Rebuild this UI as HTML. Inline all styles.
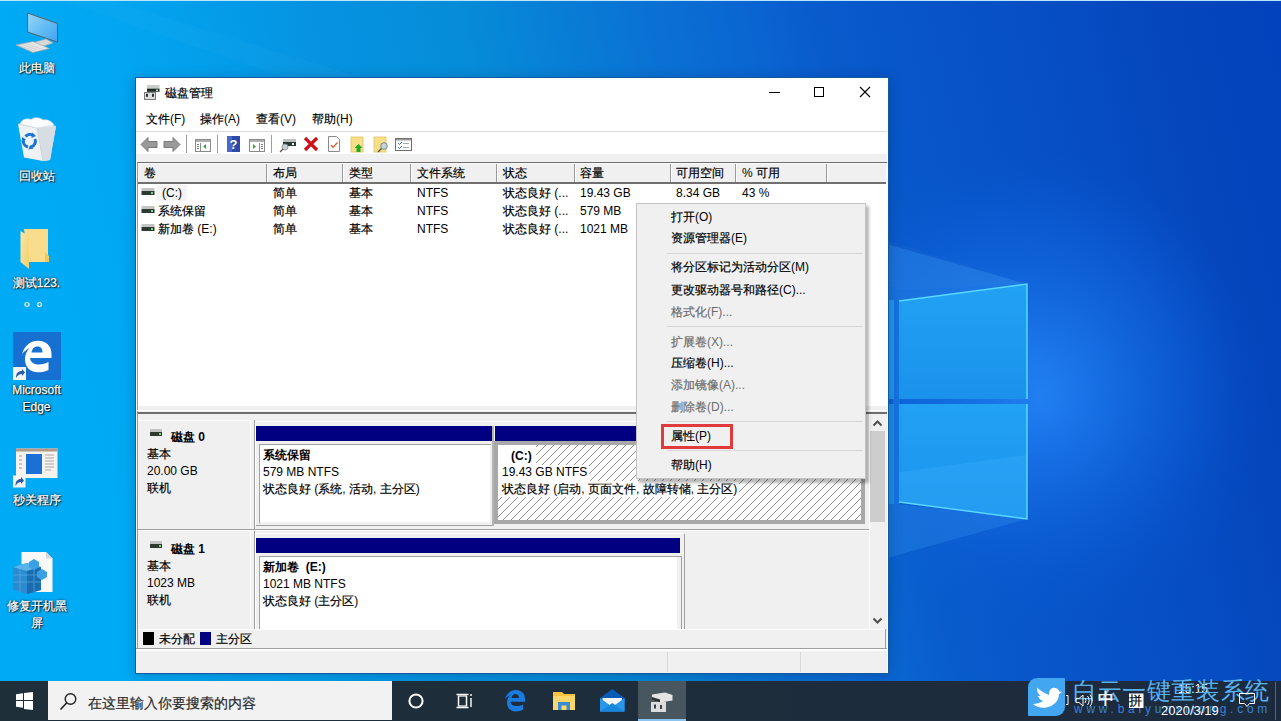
<!DOCTYPE html>
<html><head><meta charset="utf-8">
<style>
*{margin:0;padding:0;box-sizing:border-box}
html,body{width:1281px;height:721px;overflow:hidden}
body{position:relative;font-family:"Liberation Sans",sans-serif;font-size:12px;color:#000;background:#0050c8}
.a{position:absolute}
.t{position:absolute;white-space:nowrap;line-height:14px;font-size:12px}
.c{-webkit-text-stroke-width:0.2px}

#taskbar{left:0;top:681px;width:1281px;height:40px;background:linear-gradient(90deg,#1f2f3a,#1e2d3b 600px,#1c2a3e)}
#win{left:135px;top:77px;width:754px;height:597px;border:1px solid #1458a2;background:#fff;box-shadow:0 2px 12px rgba(0,20,60,.25)}
.hl{position:absolute;height:1px}
.vl{position:absolute;width:1px}
</style></head><body>
<svg id="bg" class="a" style="left:0;top:0" width="1281" height="681" viewBox="0 0 1281 681">
 <defs>
  <linearGradient id="g0" gradientUnits="userSpaceOnUse" x1="0" y1="0" x2="1281" y2="-284">
   <stop offset="0" stop-color="#00aaf4"/>
   <stop offset="0.1" stop-color="#02a4f0"/>
   <stop offset="0.22" stop-color="#0594e2"/>
   <stop offset="0.34" stop-color="#068cd8"/>
   <stop offset="0.476" stop-color="#0a72d4"/>
   <stop offset="0.55" stop-color="#0a66d2"/>
   <stop offset="0.6" stop-color="#095ccc"/>
   <stop offset="0.66" stop-color="#0856ca"/>
   <stop offset="0.8" stop-color="#064cc2"/>
   <stop offset="0.86" stop-color="#0546bc"/>
   <stop offset="0.95" stop-color="#0242bc"/>
  </linearGradient>
  <radialGradient id="glow" gradientUnits="userSpaceOnUse" cx="1040" cy="400" r="230">
   <stop offset="0" stop-color="#2a8cff" stop-opacity="0.7"/>
   <stop offset="0.45" stop-color="#1a78f0" stop-opacity="0.35"/>
   <stop offset="1" stop-color="#0a60e0" stop-opacity="0"/>
  </radialGradient>
  <linearGradient id="pane" x1="0" y1="0" x2="0" y2="1">
   <stop offset="0" stop-color="#22a2f4"/>
   <stop offset="1" stop-color="#1a92ec"/>
  </linearGradient>
 <radialGradient id="glow2" gradientUnits="userSpaceOnUse" cx="1035" cy="360" r="210">
   <stop offset="0" stop-color="#2a90ff" stop-opacity="0.32"/>
   <stop offset="0.6" stop-color="#2080f8" stop-opacity="0.14"/>
   <stop offset="1" stop-color="#1070f0" stop-opacity="0"/>
  </radialGradient>
 <radialGradient id="cy" gradientUnits="userSpaceOnUse" cx="0" cy="681" r="750">
   <stop offset="0" stop-color="#00c4ff" stop-opacity="0.35"/>
   <stop offset="0.6" stop-color="#00b4ff" stop-opacity="0.15"/>
   <stop offset="1" stop-color="#00a0ff" stop-opacity="0"/>
  </radialGradient>
 </defs>
 <rect width="1281" height="681" fill="url(#g0)"/>
 <rect width="1281" height="681" fill="url(#glow)"/>
 <rect width="1281" height="681" fill="url(#glow2)"/>
 <!-- beams -->
 <path d="M60 0 L110 0 L1027 284 L900 290 Z" fill="#ffffff" opacity="0.025"/>
 <path d="M880 242 L1027 284 L899 301 L880 304 Z" fill="#4ab0ff" opacity="0.22"/>
 <path d="M880 502 L1027 519 L880 560 Z" fill="#4ab0ff" opacity="0.2"/>
 <!-- left pane sliver -->
 <rect x="893" y="300" width="7" height="204" fill="#1474e0"/>
 <rect x="888" y="300" width="6" height="99" fill="#1c96ee"/>
 <rect x="888" y="404" width="6" height="100" fill="#1a8eea"/>
 <!-- right panes -->
 <path d="M899 301 L1027 284 L1027 399 L899 399 Z" fill="url(#pane)"/>
 <path d="M899 404 L1027 404 L1027 519 L899 502 Z" fill="url(#pane)"/>
 <path d="M899 472 L1027 455 L1027 519 L899 502 Z" fill="#40b8ff" opacity="0.25"/>
 <path d="M899 301 L1027 284 L1027 399" fill="none" stroke="#5ad8ff" stroke-width="1.5"/>
 <path d="M1027 404 L1027 519 L899 502" fill="none" stroke="#5ad8ff" stroke-width="1.5"/>
</svg>


<!-- desktop icons -->
<div class="a" style="left:0;top:0;width:1281px;height:1px;background:#b8e6ff"></div>
<svg class="a" style="left:0;top:0" width="80" height="640" viewBox="0 0 80 640">
 <defs>
  <linearGradient id="scr" x1="0" y1="0" x2="1" y2="1"><stop offset="0" stop-color="#9ad6fb"/><stop offset="0.5" stop-color="#66bdf5"/><stop offset="1" stop-color="#3fa3ee"/></linearGradient>
  <linearGradient id="fold" x1="0" y1="0" x2="1" y2="1"><stop offset="0" stop-color="#fbe6a6"/><stop offset="1" stop-color="#f3cf6c"/></linearGradient>
 </defs>
 <!-- this pc -->
 <path d="M27.5 13 L57.5 23.5 L57.5 42 L27.5 32 Z" fill="url(#scr)" stroke="#566270" stroke-width="1"/>
 <path d="M34 42.5 L46 39 L53 43 L42 46.5 Z" fill="#d8d8d8" stroke="#b0b0b0" stroke-width="0.6"/>
 <path d="M16 45 L33 41.5 L49.5 48.5 L33 52.5 Z" fill="#e6e6e6" stroke="#a8a8a8" stroke-width="0.7"/>
 <path d="M21 44.2 L37.5 50 M25 43.3 L42 49.3 M19 45.6 L35 51.3" stroke="#b8b8b8" stroke-width="0.5"/>
 <!-- recycle bin -->
 <path d="M18 124 L37 121 L56 126 L50 160 L43 161 L24 157.5 Z" fill="#eef2f5"/>
 <path d="M37 128 L56 126 L50 160 L43 161 Z" fill="#d6dde3"/>
 <path d="M18 124 L37 128 L43 161" fill="none" stroke="#c4ccd4" stroke-width="0.7"/>
 <path d="M20 124 C22 119 27 118 31 119.5 C34 117 40 117 43 120 C47 119 52 121 54 125 L37 128 Z" fill="#fafbfc" stroke="#d0d6dc" stroke-width="0.6"/>
 <path d="M25.5 136.5 A6 6 0 0 1 33.5 135.5" fill="none" stroke="#1a74d4" stroke-width="3"/>
 <path d="M35 139 A6 6 0 0 1 31 147" fill="none" stroke="#1a74d4" stroke-width="3"/>
 <path d="M28 147 A6 6 0 0 1 23.5 140" fill="none" stroke="#1a74d4" stroke-width="3"/>
 <path d="M32 132.5 L36 136 L31.5 138 Z M33.5 148.5 L28.5 149.5 L30 145 Z M21.5 142.5 L22 137 L26 139.5 Z" fill="#1a74d4"/>
 <!-- folder -->
 <path d="M24 229 L48 229 L48 262 L29 262 Z" fill="#f9dc8c"/>
 <path d="M45 252 L49 256 L49 262 L45 262 Z" fill="#f0c860"/>
 <path d="M20.5 231 L29 236 L29 269 L20.5 262 Z" fill="url(#fold)"/>
 <!-- edge -->
 <rect x="13" y="332" width="48" height="48" fill="#1670d2"/>
 <path d="M22 354 C25 345 31 340.8 38 340.8 C46 340.8 51.5 346 51.5 354 L51.5 358 L30 358 C30.5 362 33.5 364.5 38.5 364.5 C42.5 364.5 46 363.5 48.5 362 L48.5 370 C45.5 371.6 42 372.3 38 372.3 C30 372.3 25 367 25 359 C25 355 26.5 351 29.5 348 C26.5 349.5 24 351.5 22 354 Z" fill="#fff"/>
 <path d="M31.5 352.5 C32 348.5 34.5 346.5 37.5 346.5 C40.5 346.5 42.5 348.5 42.5 352.5 Z" fill="#1670d2"/>
 <rect x="13" y="367" width="13" height="13" fill="#f4f4f4"/>
 <path d="M16 378 C16 373 18 371 22 371 L22 369 L25 372.5 L22 376 L22 374 C19.5 374 17.5 375.5 16 378 Z" fill="#2a5aa8"/>
 <!-- window app -->
 <rect x="16" y="448.5" width="41.5" height="29.5" fill="#f6f2ee"/>
 <rect x="16" y="448.5" width="41.5" height="3" fill="#b09a8c"/>
 <rect x="26" y="454" width="16" height="20" fill="#1a70d6"/>
 <path d="M19 456h3M19 460h3M19 464h3M19 468h3" stroke="#999" stroke-width="1"/>
 <path d="M45 455h9M45 458h9M45 461h9M45 464h9M45 467h9M45 470h6" stroke="#aaa" stroke-width="1"/>
 <rect x="13" y="475.5" width="12.5" height="12" fill="#f4f4f4"/>
 <path d="M15.5 486 C15.5 481 17.5 479 21 479 L21 477 L24 480.5 L21 484 L21 482 C18.5 482 17 483.5 15.5 486 Z" fill="#2a5aa8"/>
 <!-- regedit file -->
 <path d="M21.5 552 L46 552 L52.5 558.5 L52.5 592 L21.5 592 Z" fill="#f8f8f8"/>
 <path d="M46 552 L46 558.5 L52.5 558.5 Z" fill="#d8d8d8"/>
 <path d="M13 567 L27 563 L41 567 L41 590 L27 594 L13 590 Z" fill="#2c8ad0"/>
 <path d="M13 567 L27 563 L41 567 L27 571 Z" fill="#5ab4ec"/>
 <path d="M27 571 L41 567 L41 590 L27 594 Z" fill="#1a6cb0"/>
 <path d="M13 575h28M13 582h28M20 565v27M34 565v27" stroke="#62b6ea" stroke-width="0.8" opacity="0.7"/>
 <path d="M29 562 L34 559 L39 562 L39 567 L34 570 L29 567 Z" fill="#3aa0e4"/>
 <path d="M37 572 L42 569 L47 572 L47 577 L42 580 L37 577 Z" fill="#3aa0e4"/>
</svg>
<style>
.d{position:absolute;white-space:nowrap;line-height:16px;font-size:12px;color:#fff;text-align:center;text-shadow:0 0 1px rgba(0,0,0,.9),1px 1px 1px rgba(0,0,0,.9),0 0 3px rgba(0,0,0,.7);-webkit-text-stroke-width:0.25px}
</style>
<div class="d" style="left:-1px;width:75px;top:60px">此电脑</div>
<div class="d" style="left:-1px;width:75px;top:168px">回收站</div>
<div class="d" style="left:-1px;width:75px;top:275px">测试123.</div>
<svg class="a" style="left:24px;top:301px" width="20" height="8" viewBox="0 0 20 8"><circle cx="3" cy="3.5" r="2" fill="none" stroke="#fff" stroke-width="1.2"/><circle cx="15.5" cy="3.5" r="2" fill="none" stroke="#fff" stroke-width="1.2"/></svg>
<div class="d" style="left:-1px;width:75px;top:382px">Microsoft</div>
<div class="d" style="left:-1px;width:75px;top:399px">Edge</div>
<div class="d" style="left:-1px;width:75px;top:492px">秒关程序</div>
<div class="d" style="left:-1px;width:75px;top:598px">修复开机黑</div>
<div class="d" style="left:-1px;width:75px;top:615px">屏</div>

<!-- window -->
<div id="win" class="a"></div>
<div class="a" style="left:136px;top:131px;width:751px;height:1px;background:#dadada"></div>
<div class="a" style="left:136px;top:154px;width:751px;height:8px;background:#f0f0f0"></div>
<!-- title -->
<svg class="a" style="left:144px;top:85px" width="17" height="16" viewBox="0 0 17 16">
<rect x="3" y="0" width="12.5" height="3.6" fill="#c9cec9"/>
<rect x="3" y="3.6" width="12.5" height="3.2" fill="#1f2a22"/>
<rect x="12" y="4.6" width="2" height="1.4" fill="#d8e8d8"/>
<rect x="0.5" y="7.5" width="11" height="7" fill="#dedede" stroke="#7c7c7c" stroke-width="1"/>
<rect x="2" y="8.8" width="2" height="3" fill="#2e3040"/>
<rect x="8" y="8.8" width="2" height="3" fill="#2e3040"/>
</svg>
<div class="t" style="left:165px;top:86px"><span class="c">磁盘管理</span></div>
<!-- caption buttons -->
<div class="a" style="left:769px;top:92px;width:11px;height:1px;background:#000"></div>
<div class="a" style="left:814px;top:87px;width:10px;height:10px;border:1px solid #000"></div>
<svg class="a" style="left:859px;top:86px" width="12" height="12" viewBox="0 0 12 12"><path d="M1 1L11 11M11 1L1 11" stroke="#000" stroke-width="1.1"/></svg>
<!-- menu -->
<div class="t" style="left:146px;top:112px"><span class="c">文件</span>(F)</div>
<div class="t" style="left:200px;top:112px"><span class="c">操作</span>(A)</div>
<div class="t" style="left:256px;top:112px"><span class="c">查看</span>(V)</div>
<div class="t" style="left:312px;top:112px"><span class="c">帮助</span>(H)</div>

<!-- toolbar -->
<svg class="a" style="left:136px;top:132px" width="290" height="22" viewBox="0 0 290 22">
 <!-- back -->
 <path d="M5 12.5L12 5.5V9.5H21V15.5H12V19.5Z" fill="#9a9a9a" stroke="#7a7a7a" stroke-width="1"/>
 <!-- forward -->
 <path d="M44 12.5L37 5.5V9.5H28V15.5H37V19.5Z" fill="#9a9a9a" stroke="#7a7a7a" stroke-width="1"/>
 <rect x="50" y="3" width="1" height="18" fill="#a0a0a0"/>
 <!-- show tree -->
 <rect x="59.5" y="7.5" width="15" height="12" fill="#fff" stroke="#8a8a8a"/>
 <rect x="60" y="8" width="14" height="2" fill="#b0b0b0"/>
 <rect x="61" y="12" width="2" height="1" fill="#777"/><rect x="61" y="14" width="2" height="1" fill="#777"/><rect x="61" y="16" width="2" height="1" fill="#777"/>
 <rect x="64" y="11" width="1" height="8" fill="#8a8a8a"/>
 <path d="M70 12V17L67 14.5Z" fill="#3aa63a"/>
 <rect x="81" y="3" width="1" height="18" fill="#a0a0a0"/>
 <!-- help -->
 <rect x="91" y="4" width="13" height="16" fill="#2e4aa8"/>
 <rect x="91" y="4" width="5" height="16" fill="#4a66c8"/>
 <text x="97.5" y="17" font-family="Liberation Sans" font-weight="bold" font-size="13" fill="#fff" text-anchor="middle">?</text>
 <!-- show action -->
 <rect x="113.5" y="7.5" width="15" height="12" fill="#fff" stroke="#8a8a8a"/>
 <rect x="114" y="8" width="14" height="2" fill="#b0b0b0"/>
 <rect x="125" y="12" width="2" height="1" fill="#777"/><rect x="125" y="14" width="2" height="1" fill="#777"/><rect x="125" y="16" width="2" height="1" fill="#777"/>
 <rect x="123" y="11" width="1" height="8" fill="#8a8a8a"/>
 <path d="M117 12V17L120 14.5Z" fill="#3aa63a"/>
 <rect x="135" y="3" width="1" height="18" fill="#a0a0a0"/>
 <!-- connect drive -->
 <rect x="147" y="7" width="13" height="3" fill="#c0c0c0"/>
 <rect x="147" y="10" width="13" height="4" fill="#2b3a30"/>
 <rect x="156" y="11" width="2" height="2" fill="#fff"/>
 <circle cx="149" cy="15" r="3" fill="#c8d0d8" stroke="#888" stroke-width="0.8"/>
 <path d="M147 17L144 20" stroke="#555" stroke-width="1.3"/>
 <!-- red x -->
 <path d="M169 6L181 18M181 6L169 18" stroke="#d0101a" stroke-width="3.2"/>
 <!-- doc check -->
 <path d="M192.5 4.5H200.5L203.5 7.5V19.5H192.5Z" fill="#fff" stroke="#8a8a8a"/>
 <path d="M195 13L197 15.5L201.5 10.5" stroke="#e06030" stroke-width="1.3" fill="none"/>
 <!-- folder up -->
 <rect x="215" y="5" width="12" height="15" fill="#f8df8a" stroke="#e0c060" stroke-width="0.8"/>
 <path d="M222.5 12L226.5 16H224.5V20H220.5V16H218.5Z" fill="#22aa22"/>
 <!-- folder search -->
 <rect x="238" y="5" width="12" height="15" fill="#f8df8a" stroke="#e0c060" stroke-width="0.8"/>
 <circle cx="248" cy="14" r="3.3" fill="#c8d4dc" stroke="#7a8a90" stroke-width="1"/>
 <path d="M245.5 16.5L242 20" stroke="#555" stroke-width="1.4"/>
 <!-- checklist -->
 <rect x="259.5" y="6.5" width="16" height="12" fill="#fff" stroke="#707070"/>
 <rect x="260" y="7" width="15" height="1.5" fill="#9a9a9a"/>
 <path d="M262 11L263.5 12.5L266 10M262 15L263.5 16.5L266 14" stroke="#3a6ad0" stroke-width="1" fill="none"/>
 <rect x="267" y="11" width="6" height="1" fill="#aaa"/><rect x="267" y="15" width="6" height="1" fill="#aaa"/>
</svg>

<!-- list view -->
<div class="a" style="left:137px;top:162px;width:750px;height:244px;border-top:1px solid #6e6e6e;border-left:1px solid #9a9a9a;background:#fff"></div>
<div class="a" style="left:138px;top:163px;width:748px;height:19px;background:#f0f0f0;border-top:1px solid #fafafa"></div>
<div class="a" style="left:138px;top:182px;width:748px;height:2px;background:#707070"></div>
<div class="vl" style="left:266px;top:164px;height:18px;background:#9a9a9a"></div><div class="vl" style="left:267px;top:164px;height:18px;background:#fdfdfd"></div>
<div class="vl" style="left:342px;top:164px;height:18px;background:#9a9a9a"></div><div class="vl" style="left:343px;top:164px;height:18px;background:#fdfdfd"></div>
<div class="vl" style="left:410px;top:164px;height:18px;background:#9a9a9a"></div><div class="vl" style="left:411px;top:164px;height:18px;background:#fdfdfd"></div>
<div class="vl" style="left:496px;top:164px;height:18px;background:#9a9a9a"></div><div class="vl" style="left:497px;top:164px;height:18px;background:#fdfdfd"></div>
<div class="vl" style="left:574px;top:164px;height:18px;background:#9a9a9a"></div><div class="vl" style="left:575px;top:164px;height:18px;background:#fdfdfd"></div>
<div class="vl" style="left:670px;top:164px;height:18px;background:#9a9a9a"></div><div class="vl" style="left:671px;top:164px;height:18px;background:#fdfdfd"></div>
<div class="vl" style="left:735px;top:164px;height:18px;background:#9a9a9a"></div><div class="vl" style="left:736px;top:164px;height:18px;background:#fdfdfd"></div>
<div class="vl" style="left:826px;top:164px;height:18px;background:#9a9a9a"></div><div class="vl" style="left:827px;top:164px;height:18px;background:#fdfdfd"></div>
<div class="t" style="left:144px;top:166px"><span class="c">卷</span></div>
<div class="t" style="left:273px;top:166px"><span class="c">布局</span></div>
<div class="t" style="left:349px;top:166px"><span class="c">类型</span></div>
<div class="t" style="left:417px;top:166px"><span class="c">文件系统</span></div>
<div class="t" style="left:503px;top:166px"><span class="c">状态</span></div>
<div class="t" style="left:580px;top:166px"><span class="c">容量</span></div>
<div class="t" style="left:676px;top:166px"><span class="c">可用空间</span></div>
<div class="t" style="left:742px;top:166px">% <span class="c">可用</span></div>

<div class="a" style="left:156px;top:185px;width:31px;height:16px;background:#f4f4f4"></div>
<svg class="a" style="left:141px;top:187px" width="14" height="46" viewBox="0 0 14 46">
 <g id="drv"><rect x="0.5" y="1" width="13" height="3" fill="#c4c4c4"/><rect x="0.5" y="4" width="13" height="4" fill="#2d3a30"/><rect x="10" y="5" width="2" height="2" fill="#7fd07f"/></g>
 <use href="#drv" y="18"/><use href="#drv" y="36"/>
</svg>
<div class="t" style="left:162px;top:186px">(C:)</div>
<div class="t" style="left:158px;top:204px"><span class="c">系统保留</span></div>
<div class="t" style="left:158px;top:222px"><span class="c">新加卷</span> (E:)</div>
<div class="t" style="left:273px;top:186px"><span class="c">简单</span></div>
<div class="t" style="left:273px;top:204px"><span class="c">简单</span></div>
<div class="t" style="left:273px;top:222px"><span class="c">简单</span></div>
<div class="t" style="left:349px;top:186px"><span class="c">基本</span></div>
<div class="t" style="left:349px;top:204px"><span class="c">基本</span></div>
<div class="t" style="left:349px;top:222px"><span class="c">基本</span></div>
<div class="t" style="left:417px;top:186px">NTFS</div>
<div class="t" style="left:417px;top:204px">NTFS</div>
<div class="t" style="left:417px;top:222px">NTFS</div>
<div class="t" style="left:503px;top:186px"><span class="c">状态良好</span> (...</div>
<div class="t" style="left:503px;top:204px"><span class="c">状态良好</span> (...</div>
<div class="t" style="left:503px;top:222px"><span class="c">状态良好</span> (...</div>
<div class="t" style="left:580px;top:186px">19.43 GB</div>
<div class="t" style="left:580px;top:204px">579 MB</div>
<div class="t" style="left:580px;top:222px">1021 MB</div>
<div class="t" style="left:676px;top:186px">8.34 GB</div>
<div class="t" style="left:742px;top:186px">43 %</div>

<!-- splitter -->
<div class="a" style="left:137px;top:406px;width:750px;height:7px;background:#f0f0f0;border-left:1px solid #9a9a9a"></div>
<div class="a" style="left:137px;top:410px;width:750px;height:1px;background:#fff"></div>

<!-- lower pane -->
<div class="a" style="left:137px;top:412px;width:750px;height:236px;background:#f0f0f0;border-top:2px solid #6e6e6e;border-left:1px solid #9a9a9a"></div>
<div class="a" style="left:136px;top:648px;width:751px;height:1px;background:#a0a0a0"></div>
<div class="a" style="left:136px;top:650px;width:751px;height:1px;background:#fff"></div>
<div class="a" style="left:136px;top:651px;width:751px;height:22px;background:#f0f0f0"></div>
<div class="vl" style="left:667px;top:652px;height:20px;background:#d8d8d8"></div>
<div class="vl" style="left:800px;top:652px;height:20px;background:#d8d8d8"></div>

<!-- scrollbar -->
<div class="a" style="left:869px;top:414px;width:17px;height:215px;background:#f0f0f0"></div>
<div class="a" style="left:870px;top:431px;width:15px;height:91px;background:#cdcdcd"></div>
<svg class="a" style="left:872px;top:419px" width="11" height="8" viewBox="0 0 11 8"><path d="M1.5 6.5L5.5 2.5L9.5 6.5" stroke="#505050" stroke-width="2" fill="none"/></svg>
<svg class="a" style="left:872px;top:617px" width="11" height="8" viewBox="0 0 11 8"><path d="M1.5 1.5L5.5 5.5L9.5 1.5" stroke="#505050" stroke-width="2" fill="none"/></svg>

<!-- disk 0 -->
<div class="a" style="left:138px;top:420px;width:113px;height:108px;border-top:1px solid #fff;border-right:1px solid #fff"></div>
<div class="vl" style="left:254px;top:420px;height:110px;background:#a0a0a0"></div>
<div class="a" style="left:255px;top:421px;width:611px;height:105px;border-top:1px solid #fff;border-left:1px solid #fff"></div>
<svg class="a" style="left:150px;top:429px" width="13" height="8" viewBox="0 0 13 8"><rect x="0" y="0" width="12" height="3" fill="#c4c4c4"/><rect x="0" y="3" width="12" height="4" fill="#2d3a30"/><rect x="9" y="4" width="2" height="2" fill="#7fd07f"/></svg>
<div class="t" style="left:171px;top:430px;font-weight:bold;-webkit-text-stroke-width:0">磁盘 0</div>
<div class="t" style="left:147px;top:447px"><span class="c">基本</span></div>
<div class="t" style="left:147px;top:464px">20.00 GB</div>
<div class="t" style="left:147px;top:481px"><span class="c">联机</span></div>

<div class="a" style="left:256px;top:426px;width:236px;height:15px;background:#000080"></div>
<div class="a" style="left:259px;top:444px;width:234px;height:81px;border:1px solid #a0a0a0;border-right:3px solid #f0f0f0;border-bottom:3px solid #f0f0f0;background:#fff"></div>
<div class="hl" style="left:256px;top:525px;width:238px;background:#a0a0a0"></div>
<div class="t" style="left:263px;top:448px;font-weight:bold;-webkit-text-stroke-width:0">系统保留</div>
<div class="t" style="left:263px;top:465px">579 MB NTFS</div>
<div class="t" style="left:263px;top:482px"><span class="c">状态良好</span> (<span class="c">系统</span>, <span class="c">活动</span>, <span class="c">主分区</span>)</div>

<div class="a" style="left:492px;top:426px;width:2px;height:100px;background:#b4b4b4"></div>
<div class="a" style="left:495px;top:426px;width:370px;height:15px;background:#000080"></div>
<div class="a" style="left:494px;top:441px;width:371px;height:83px;background:#a8a8a8"></div>
<svg class="a" style="left:498px;top:445px" width="363" height="75" viewBox="0 0 363 75" shape-rendering="crispEdges">
 <defs><pattern id="hatch" width="8" height="8" patternUnits="userSpaceOnUse">
  <rect width="8" height="8" fill="#fff"/>
  <rect x="7" y="0" width="1" height="1" fill="#909090"/><rect x="6" y="1" width="1" height="1" fill="#909090"/><rect x="5" y="2" width="1" height="1" fill="#909090"/><rect x="4" y="3" width="1" height="1" fill="#909090"/><rect x="3" y="4" width="1" height="1" fill="#909090"/><rect x="2" y="5" width="1" height="1" fill="#909090"/><rect x="1" y="6" width="1" height="1" fill="#909090"/><rect x="0" y="7" width="1" height="1" fill="#909090"/>
 </pattern></defs>
 <rect width="363" height="75" fill="url(#hatch)"/>
 <rect x="0" y="0" width="38" height="20" fill="#fff"/>
 <rect x="0" y="20" width="91" height="16" fill="#fff"/>
 <rect x="0" y="36" width="241" height="16" fill="#fff"/>
</svg>
<div class="t" style="left:511px;top:449px;font-weight:bold;-webkit-text-stroke-width:0">(C:)</div>
<div class="t" style="left:502px;top:465px">19.43 GB NTFS</div>
<div class="t" style="left:502px;top:482px"><span class="c">状态良好</span> (<span class="c">启动</span>, <span class="c">页面文件</span>, <span class="c">故障转储</span>, <span class="c">主分区</span>)</div>

<div class="hl" style="left:138px;top:529px;width:731px;background:#a0a0a0"></div>
<div class="hl" style="left:138px;top:530px;width:731px;background:#fff"></div>

<!-- disk 1 -->
<div class="a" style="left:138px;top:531px;width:113px;height:98px;border-right:1px solid #fff"></div>
<div class="vl" style="left:254px;top:531px;height:98px;background:#a0a0a0"></div>
<svg class="a" style="left:150px;top:541px" width="13" height="8" viewBox="0 0 13 8"><rect x="0" y="0" width="12" height="3" fill="#c4c4c4"/><rect x="0" y="3" width="12" height="4" fill="#2d3a30"/><rect x="9" y="4" width="2" height="2" fill="#7fd07f"/></svg>
<div class="t" style="left:171px;top:542px;font-weight:bold;-webkit-text-stroke-width:0">磁盘 1</div>
<div class="t" style="left:147px;top:559px"><span class="c">基本</span></div>
<div class="t" style="left:147px;top:576px">1023 MB</div>
<div class="t" style="left:147px;top:593px"><span class="c">联机</span></div>
<div class="a" style="left:255px;top:533px;width:430px;height:96px;border-top:1px solid #fff;border-left:1px solid #fff;border-right:1px solid #a0a0a0"></div>
<div class="a" style="left:256px;top:538px;width:424px;height:15px;background:#000080"></div>
<div class="a" style="left:259px;top:556px;width:423px;height:73px;border-top:1px solid #a0a0a0;border-left:1px solid #a0a0a0;border-right:1px solid #a0a0a0;border-right-color:#a0a0a0;background:#fff;box-shadow:inset -4px 0 0 #f0f0f0"></div>
<div class="t" style="left:263px;top:560px;font-weight:bold;-webkit-text-stroke-width:0">新加卷 &nbsp;(E:)</div>
<div class="t" style="left:263px;top:577px">1021 MB NTFS</div>
<div class="t" style="left:263px;top:594px"><span class="c">状态良好</span> (<span class="c">主分区</span>)</div>

<div class="vl" style="left:869px;top:414px;height:215px;background:#fff"></div>
<div class="hl" style="left:138px;top:629px;width:748px;background:#fff"></div>
<div class="vl" style="left:885px;top:629px;height:19px;background:#a0a0a0"></div>
<!-- legend -->
<div class="a" style="left:143px;top:632px;width:11px;height:13px;background:#000"></div>
<div class="t" style="left:159px;top:632px"><span class="c">未分配</span></div>
<div class="a" style="left:200px;top:632px;width:11px;height:13px;background:#000080"></div>
<div class="t" style="left:216px;top:632px"><span class="c">主分区</span></div>
<!-- context menu -->
<div class="a" style="left:639px;top:206px;width:230px;height:277px;background:rgba(0,0,0,0.28);filter:blur(1.5px)"></div>
<div class="a" style="left:636px;top:203px;width:230px;height:276px;background:#f0f0f0;border:1px solid #c4c4c4"></div>
<div class="t" style="left:671px;top:210px"><span class="c">打开</span>(O)</div>
<div class="t" style="left:671px;top:231px"><span class="c">资源管理器</span>(E)</div>
<div class="hl" style="left:667px;top:253px;width:196px;background:#d7d7d7"></div>
<div class="t" style="left:671px;top:260px"><span class="c">将分区标记为活动分区</span>(M)</div>
<div class="t" style="left:671px;top:283px"><span class="c">更改驱动器号和路径</span>(C)...</div>
<div class="t" style="left:671px;top:305px;color:#6d6d6d"><span class="c">格式化</span>(F)...</div>
<div class="hl" style="left:667px;top:326px;width:196px;background:#d7d7d7"></div>
<div class="t" style="left:671px;top:335px;color:#6d6d6d"><span class="c">扩展卷</span>(X)...</div>
<div class="t" style="left:671px;top:356px"><span class="c">压缩卷</span>(H)...</div>
<div class="t" style="left:671px;top:378px;color:#6d6d6d"><span class="c">添加镜像</span>(A)...</div>
<div class="t" style="left:671px;top:400px;color:#6d6d6d"><span class="c">删除卷</span>(D)...</div>
<div class="hl" style="left:667px;top:421px;width:196px;background:#d7d7d7"></div>
<div class="t" style="left:671px;top:429px"><span class="c">属性</span>(P)</div>
<div class="a" style="left:661px;top:424px;width:72px;height:25px;border:3px solid #e03a3c"></div>
<div class="hl" style="left:667px;top:450px;width:196px;background:#d7d7d7"></div>
<div class="t" style="left:671px;top:458px"><span class="c">帮助</span>(H)</div>
<div id="taskbar" class="a"></div>
<!-- taskbar -->
<div class="a" style="left:48px;top:681px;width:344px;height:39px;background:#f2f2f2"></div>
<svg class="a" style="left:0;top:681px" width="700" height="40" viewBox="0 0 700 40">
 <path d="M16 13.2 L23 12.3 L23 19 L16 19 Z M24 12.1 L33 11.1 L33 19 L24 19 Z M16 20 L23 20 L23 26.7 L16 25.8 Z M24 20 L33 20 L33 28.9 L24 27.9 Z" fill="#fff"/>
 <circle cx="70.5" cy="18" r="5.3" fill="none" stroke="#222" stroke-width="1.4"/>
 <path d="M66.8 21.8 L60.5 28.5" stroke="#222" stroke-width="1.6"/>
 <circle cx="416" cy="20" r="6.6" fill="none" stroke="#fff" stroke-width="2"/>
 <path d="M456.5 13.5h12M456.5 26.5h12M458.5 15v10M466.5 15v10" stroke="#fff" stroke-width="1.3" fill="none"/>
 <rect x="458.5" y="15" width="8" height="10" fill="none" stroke="#fff" stroke-width="1.2"/>
 <path d="M471 13v2M471 17v9" stroke="#fff" stroke-width="1.4"/>
 <!-- edge -->
 <g transform="translate(490.04,-222.74) scale(0.68)">
 <path d="M22 354 C25 345 31 340.8 38 340.8 C46 340.8 51.5 346 51.5 354 L51.5 358 L30 358 C30.5 362 33.5 364.5 38.5 364.5 C42.5 364.5 46 363.5 48.5 362 L48.5 370 C45.5 371.6 42 372.3 38 372.3 C30 372.3 25 367 25 359 C25 355 26.5 351 29.5 348 C26.5 349.5 24 351.5 22 354 Z" fill="#1a7ce0"/>
 <path d="M31.5 352.5 C32 348.5 34.5 346.5 37.5 346.5 C40.5 346.5 42.5 348.5 42.5 352.5 Z" fill="#1e2d3b"/>
 </g>
 <!-- explorer -->
 <path d="M553 11 L562 11 L564 13 L575 13 L575 29 L553 29 Z" fill="#f8c440"/>
 <rect x="553" y="15" width="22" height="14" fill="#fcd86a"/>
 <path d="M558 29 L558 21 L570 21 L570 29 L566.5 29 L566.5 24.5 L561.5 24.5 L561.5 29 Z" fill="#3a8ad6"/>
 <!-- mail -->
 <path d="M600 17 L612.3 8 L624.6 17 L624.6 30.5 L600 30.5 Z" fill="#0a5ab8"/>
 <path d="M602.5 17 L622 17 L622 25 L602.5 25 Z" fill="#f4f4f4"/>
 <path d="M600 17 L612.3 26 L624.6 17 L624.6 30.5 L600 30.5 Z" fill="#2a98ea"/>
 <path d="M600 30.5 L612.3 22 L624.6 30.5 Z" fill="#1a86de"/>
 <!-- active -->
 <rect x="638" y="0" width="48" height="40" fill="#48565f"/>
 <rect x="638" y="38" width="48" height="2" fill="#8cc4f0"/>
 <path d="M652 13.5 L665 11.5 L672.5 14 L672.5 19.5 L660 21.5 L652 19 Z" fill="#e4e4e4"/>
 <path d="M652 16 L660 18.5 L660 21.5 L652 19 Z" fill="#303030"/>
 <rect x="651" y="21" width="15" height="10" fill="#dcdcdc"/>
 <rect x="654" y="23.5" width="2" height="4" fill="#3a3a4a"/><rect x="660" y="24" width="2" height="4" fill="#3a3a4a"/>
</svg>
<div class="t" style="left:88px;top:695px;font-size:14px;line-height:17px;color:#2a2a2a"><span class="c">在这里输入你要搜索的内容</span></div>

<div class="t" style="left:1178px;top:682px;color:#fff">15:15</div>
<!-- watermark -->
<div class="a" style="left:1028px;top:678px;width:37px;height:38px;background:#42a6f0;border-radius:9px 1px 9px 1px"></div>
<svg class="a" style="left:1028px;top:678px" width="37" height="38" viewBox="0 0 37 38">
 <path d="M5 26 C9 30 17 31 23 28 C29 25 31 20 31 16 L34 14 L31.5 13.5 C30 10 27 9 24.5 10 C22 11 20.5 14 21 17 C17 15 12 12.5 9 9.5 C8.5 13 10 16 12.5 18 L10 18 C11 21 13 22.5 15.5 23 C12 25 8 26 5 26 Z" fill="#fff"/>
</svg>
<div class="t" style="left:1073px;top:677px;font-size:24px;line-height:28px;color:#58b2f4;font-weight:300;letter-spacing:0.6px;-webkit-text-stroke-width:0">白云一键重装系统</div>
<div class="t" style="left:1074px;top:702px;font-size:12px;line-height:14px;color:#3a82d0;letter-spacing:3.75px;-webkit-text-stroke-width:0">www.baiyunxitong.com</div>

<!-- tray -->
<div class="a" style="left:1275px;top:682px;width:1px;height:38px;background:#5a6670"></div>
<svg class="a" style="left:1060px;top:681px" width="221" height="40" viewBox="0 0 221 40">
 <path d="M6 14.5h2v9h-2" fill="none" stroke="#fff" stroke-width="1"/>
 <path d="M16 17.5h3l4-3.5v11l-4-3.5h-3z" fill="none" stroke="#fff" stroke-width="1"/>
 <path d="M25 17a4 4 0 0 1 0 5M27.5 15a7 7 0 0 1 0 9M30 13.5a9.5 9.5 0 0 1 0 12" fill="none" stroke="#fff" stroke-width="1"/>
 <rect x="69" y="12.5" width="14.5" height="14.5" fill="#fff"/>
 <path d="M179.5 12.5h15v10h-5l-2.5 3-2.5-3h-5z" fill="none" stroke="#fff" stroke-width="1"/>
</svg>
<div class="t" style="left:1098px;top:690px;font-size:16px;line-height:18px;color:#fff;-webkit-text-stroke-width:0.5px">中</div>
<div class="t" style="left:1129px;top:693px;font-size:13px;line-height:15px;color:#000"><span class="c">拼</span></div>
<div class="t" style="left:1161px;top:703px;font-size:13px;line-height:15px;color:#fff">2020/3/19</div>
</body></html>
